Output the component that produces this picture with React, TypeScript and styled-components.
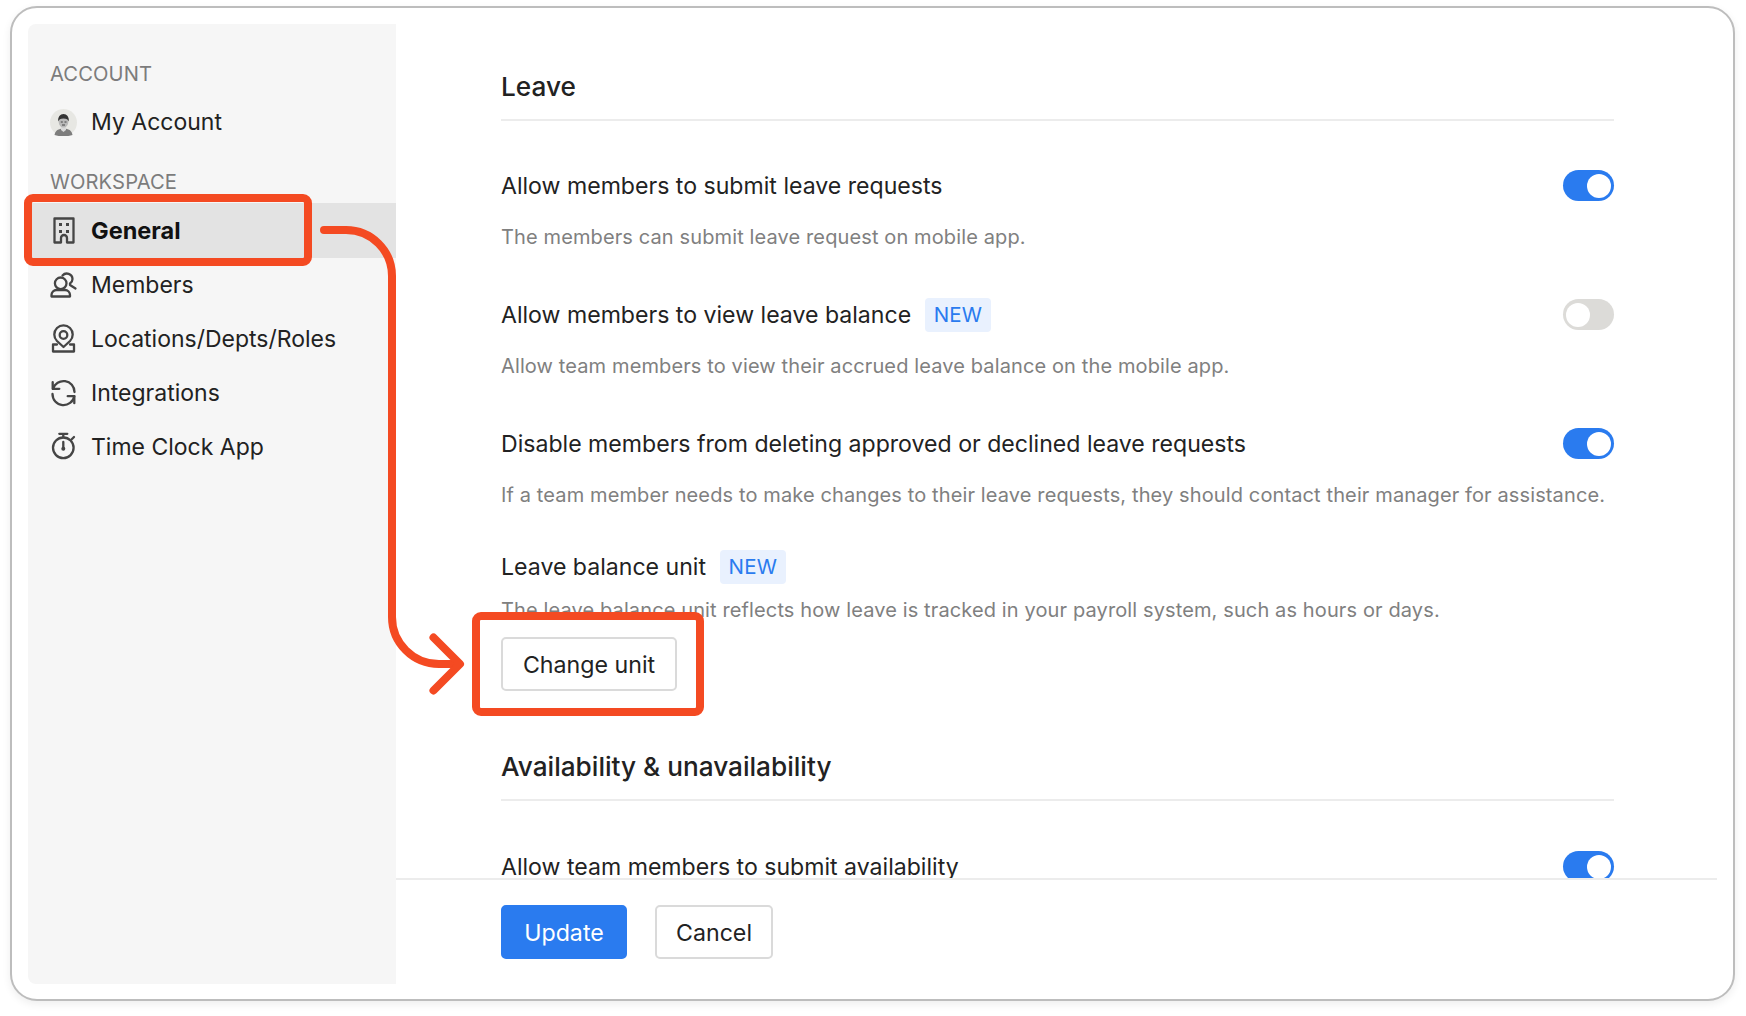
import React from 'react';
import styled, { createGlobalStyle } from 'styled-components';

const GlobalStyle = createGlobalStyle`
  html, body {
    margin: 0;
    padding: 0;
    background: #ffffff;
  }
  body {
    font-family: Inter, "Noto Sans", sans-serif;
    color: #1f1f1f;
  }
`;

const Stage = styled.div`
  position: relative;
  width: 1746px;
  height: 1016px;
  padding: 6px 11px 15px 10px;
  box-sizing: border-box;
  overflow: hidden;
`;

const Window = styled.div`
  display: flex;
  height: 995px;
  box-sizing: border-box;
  padding: 16px 16px 15px;
  background: #ffffff;
  border: 2px solid #bdbdbd;
  border-radius: 27px;
  box-shadow: 0 3px 8px rgba(0, 0, 0, 0.07);
`;

const Sidebar = styled.nav`
  flex: 0 0 368px;
  padding-top: 35px;
  background: #f6f6f6;
  border-radius: 8px 0 0 8px;
  box-sizing: border-box;
`;

const SectionLabel = styled.div`
  height: 30px;
  line-height: 30px;
  margin: 0 0 6px;
  padding-left: 22px;
  font-size: 20.2px;
  letter-spacing: 0.1px;
  color: #7c7c7c;
  & ~ & {
    margin: 18px 0 6px;
  }
`;

const NavItem = styled.div<{ $active?: boolean }>`
  display: flex;
  align-items: center;
  gap: 14px;
  height: 54.25px;
  padding-left: 22px;
  font-size: ${(p) => (p.$active ? 23.5 : 23)}px;
  font-weight: ${(p) => (p.$active ? 700 : 400)};
  color: ${(p) => (p.$active ? '#111111' : '#222222')};
  background: ${(p) => (p.$active ? '#e3e3e3' : 'transparent')};
`;

const NavIcon = styled.svg`
  flex: 0 0 27px;
  width: 27px;
  height: 27px;
  overflow: visible;
  fill: none;
  stroke: #454545;
  stroke-width: 2.3;
  stroke-linecap: round;
  stroke-linejoin: round;
`;

const Main = styled.main`
  flex: 1;
  min-width: 0;
  display: flex;
  flex-direction: column;
`;

const Scroller = styled.div`
  flex: 1;
  min-height: 0;
  overflow: hidden;
  padding: 45px 103px 0 105px;
`;

const Heading = styled.h2<{ $spaced?: boolean }>`
  height: 36px;
  line-height: 36px;
  margin: ${(p) => (p.$spaced ? '58px' : '0')} 0 0;
  padding-bottom: 14px;
  border-bottom: 2px solid #ececec;
  font-size: 26.2px;
  font-weight: 500;
  color: #222222;
  box-sizing: content-box;
`;

const Setting = styled.section<{ $top?: number }>`
  margin-top: ${(p) => p.$top ?? 47}px;
`;

const SettingHead = styled.div`
  display: flex;
  align-items: center;
  justify-content: space-between;
  height: 31px;
`;

const TitleGroup = styled.div`
  display: flex;
  align-items: center;
  gap: 13.5px;
`;

const Title = styled.span`
  padding-top: 2px;
  font-size: 23.1px;
  line-height: 31px;
  color: #222222;
`;

const Badge = styled.span`
  display: flex;
  align-items: center;
  height: 34px;
  padding: 0 9px;
  border-radius: 4px;
  background: #e9f1fe;
  color: #2a7bef;
  font-size: 20.5px;
  letter-spacing: 0.2px;
`;

const Description = styled.p<{ $top?: number }>`
  margin: ${(p) => p.$top ?? 21}px 0 0;
  font-size: 20px;
  letter-spacing: 0.12px;
  line-height: 30px;
  color: #808080;
  white-space: nowrap;
`;

const Toggle = styled.span<{ $on?: boolean }>`
  display: flex;
  flex: 0 0 51px;
  align-items: center;
  justify-content: ${(p) => (p.$on ? 'flex-end' : 'flex-start')};
  width: 51px;
  height: 31px;
  padding: 0 3px;
  box-sizing: border-box;
  border-radius: 16px;
  background: ${(p) => (p.$on ? '#2a7bef' : '#dcdbd8')};
  &::after {
    content: '';
    width: 24px;
    height: 24px;
    border-radius: 50%;
    background: #ffffff;
  }
`;

const Button = styled.button<{ $primary?: boolean; $width: number }>`
  width: ${(p) => p.$width}px;
  height: 54px;
  padding: 2px 0 0;
  border: 2px solid ${(p) => (p.$primary ? '#2a7bef' : '#dadada')};
  border-radius: 5px;
  background: ${(p) => (p.$primary ? '#2a7bef' : '#ffffff')};
  color: ${(p) => (p.$primary ? '#ffffff' : '#222222')};
  font-family: inherit;
  font-size: 23.2px;
`;

const ChangeUnit = styled(Button)`
  display: block;
  margin-top: 12px;
`;

const Footer = styled.footer`
  display: flex;
  gap: 28px;
  flex: 0 0 106px;
  box-sizing: border-box;
  padding: 25px 0 0 105px;
  border-top: 2px solid #ececec;
`;

const Callout = styled.div<{ $x: number; $y: number; $w: number; $h: number }>`
  position: absolute;
  left: ${(p) => p.$x}px;
  top: ${(p) => p.$y}px;
  width: ${(p) => p.$w}px;
  height: ${(p) => p.$h}px;
  box-sizing: border-box;
  border: 8px solid #f44a22;
  border-radius: 9px;
  pointer-events: none;
`;

const Arrow = styled.svg`
  position: absolute;
  left: 0;
  top: 0;
  pointer-events: none;
  fill: none;
  stroke: #f44a22;
  stroke-width: 8;
  stroke-linecap: round;
  stroke-linejoin: round;
`;

const Avatar = () => (
  <svg width="27" height="27" viewBox="0 0 27 27" style={{ flex: '0 0 27px' }}>
    <circle cx="13.5" cy="13.5" r="13.5" fill="#e7e7e3" />
    <path d="M4.5 26c.6-4.6 4-6.600 9-6.600s8.400 2 9 6.600c-2.500 1-5.500 1-9 1s-6.500 0-9-1z" fill="#7d7d7d" />
    <path d="M11 17h5v4l-2.500 2-2.500-2z" fill="#d9d9d9" />
    <ellipse cx="13.5" cy="13" rx="4.800" ry="5.600" fill="#b9b9b9" />
    <path d="M8.200 12.500c-.6-4.500 2-7.500 5.300-7.500s5.900 3 5.300 7.500c-.8-2-2-3-5.300-3s-4.500 1-5.300 3z" fill="#333333" />
    <path d="M10.800 13h2M14.500 13h2M12 16h3" stroke="#444" strokeWidth="1" />
  </svg>
);

const BuildingIcon = () => (
  <NavIcon viewBox="0 0 27 27">
    <path d="M11 25.500H4.500V1.500h19v24H17v-4.500a3 3 0 0 0-6 0z" strokeLinecap="butt" />
    <path d="M9 6h3v3H9zM16 6h3v3h-3zM9 13h3v3H9zM16 13h3v3h-3z" fill="#454545" stroke="none" />
  </NavIcon>
);

const MembersIcon = () => (
  <NavIcon viewBox="0 0 27 27">
    <circle cx="10.700" cy="12.300" r="5.800" />
    <path d="M1.500 25.500v-1.500a5 5 0 0 1 5-5h8.500a5 5 0 0 1 5 5v1.500z" />
    <path d="M12.500 4.500a5.700 5.700 0 0 1 10 3.500c0 2-1 3.500-2.500 4.500v1.500l5.500 3.500" />
  </NavIcon>
);

const LocationIcon = () => (
  <NavIcon viewBox="0 -1.500 27 27">
    <path d="M13.500 20.500 7 14.500a9.200 9.200 0 1 1 13 0z" />
    <circle cx="13.500" cy="8.500" r="3.800" />
    <path d="M7 18H3v7h21v-7h-4" />
  </NavIcon>
);

const SyncIcon = () => (
  <NavIcon viewBox="0 0 27 27">
    <path d="M2.700 2.200v6.600h6.600" />
    <path d="M3 8.800A11 11 0 0 1 24.500 12" />
    <path d="M24.300 23.200v-7h-6.600" />
    <path d="M24.300 16.200A11 11 0 0 1 2.500 14" />
  </NavIcon>
);

const TimerIcon = () => (
  <NavIcon viewBox="0 0 27 27">
    <circle cx="13.300" cy="13.800" r="10.300" />
    <path d="M9.300-.2h8M13.300-.2v3.500M21.500 5.500 24 3M13.300 8v7" />
    <circle cx="13.300" cy="14.800" r="2" fill="#454545" stroke="none" />
  </NavIcon>
);

export default function App() {
  return (
    <Stage>
      <GlobalStyle />
      <Window>
        <Sidebar>
          <SectionLabel>ACCOUNT</SectionLabel>
          <NavItem><Avatar />My Account</NavItem>
          <SectionLabel>WORKSPACE</SectionLabel>
          <NavItem $active><BuildingIcon />General</NavItem>
          <NavItem><MembersIcon />Members</NavItem>
          <NavItem><LocationIcon />Locations/Depts/Roles</NavItem>
          <NavItem><SyncIcon />Integrations</NavItem>
          <NavItem><TimerIcon />Time Clock App</NavItem>
        </Sidebar>
        <Main>
          <Scroller>
            <Heading>Leave</Heading>
            <Setting $top={49}>
              <SettingHead>
                <Title>Allow members to submit leave requests</Title>
                <Toggle $on />
              </SettingHead>
              <Description>The members can submit leave request on mobile app.</Description>
            </Setting>
            <Setting>
              <SettingHead>
                <TitleGroup>
                  <Title>Allow members to view leave balance</Title>
                  <Badge>NEW</Badge>
                </TitleGroup>
                <Toggle />
              </SettingHead>
              <Description>Allow team members to view their accrued leave balance on the mobile app.</Description>
            </Setting>
            <Setting>
              <SettingHead>
                <Title>Disable members from deleting approved or declined leave requests</Title>
                <Toggle $on />
              </SettingHead>
              <Description>If a team member needs to make changes to their leave requests, they should contact their manager for assistance.</Description>
            </Setting>
            <Setting $top={41}>
              <SettingHead>
                <TitleGroup>
                  <Title>Leave balance unit</Title>
                  <Badge>NEW</Badge>
                </TitleGroup>
              </SettingHead>
              <Description $top={13}>The leave balance unit reflects how leave is tracked in your payroll system, such as hours or days.</Description>
              <ChangeUnit $width={176}>Change unit</ChangeUnit>
            </Setting>
            <Heading $spaced>Availability &amp; unavailability</Heading>
            <Setting $top={50}>
              <SettingHead>
                <Title>Allow team members to submit availability</Title>
                <Toggle $on />
              </SettingHead>
            </Setting>
          </Scroller>
          <Footer>
            <Button $primary $width={126}>Update</Button>
            <Button $width={118}>Cancel</Button>
          </Footer>
        </Main>
      </Window>
      <Callout $x={24} $y={194} $w={288} $h={72} />
      <Callout $x={472} $y={612} $w={232} $h={104} />
      <Arrow width="1746" height="1016" viewBox="0 0 1746 1016">
        <path d="M324 230H346A46 46 0 0 1 392 276V617A47 47 0 0 0 439 664H458" />
        <path d="M433.500 637.500 460 664 433.500 690.500" />
      </Arrow>
    </Stage>
  );
}
